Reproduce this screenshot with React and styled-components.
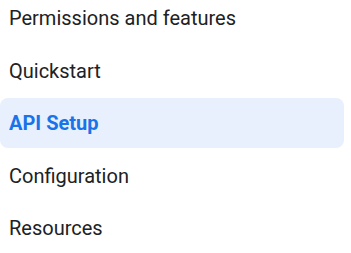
import React from "react"
import styled, { createGlobalStyle } from "styled-components"

const GlobalStyle = createGlobalStyle`
  body {
    margin: 0;
    background: #ffffff;
    font-family: Roboto, "Liberation Sans", sans-serif;
    overflow: hidden;
  }
`

const Nav = styled.nav`
  display: flex;
  flex-direction: column;
  gap: 2.5px;
  width: 344px;
  margin-top: -7px;
`

const Item = styled.a`
  display: flex;
  align-items: center;
  height: 50px;
  padding: 0 9px;
  border-radius: 8px;
  font-size: 20px;
  color: ${props => props.active ? "#1a73e8" : "#202124"};
  font-weight: ${props => props.active ? 700 : 400};
  background: ${props => props.active ? "#e8f0fe" : "transparent"};
  text-decoration: none;
  cursor: pointer;
`

const items = ["Permissions and features", "Quickstart", "API Setup", "Configuration", "Resources"]

const App = () => {
  return (
    <>
      <GlobalStyle />
      <Nav>
        {items.map(label => (
          <Item key={label} active={label === "API Setup"}>{label}</Item>
        ))}
      </Nav>
    </>
  )
}

export default App
